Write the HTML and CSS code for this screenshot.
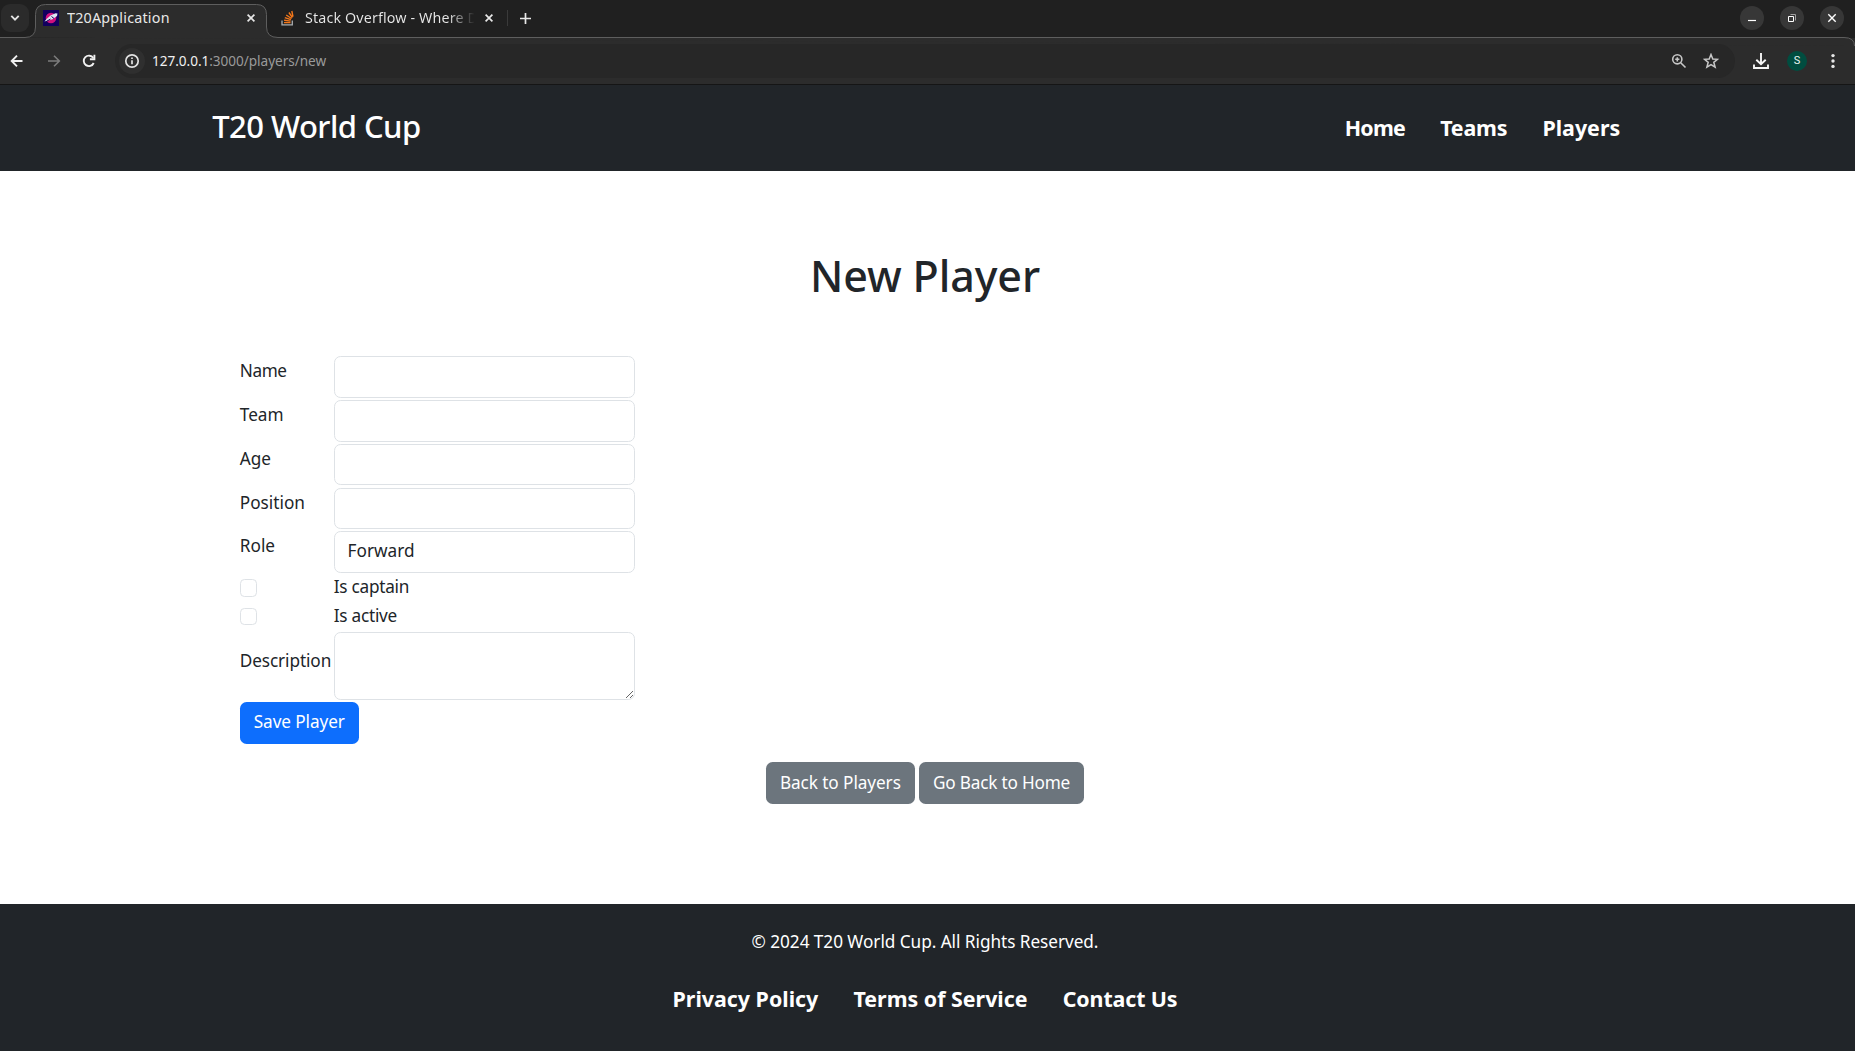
FILE: index.html
```
<!DOCTYPE html>
<html lang="en">
<head>
<meta charset="utf-8">
<title>T20Application</title>
<link rel="stylesheet" href="styles.css">
</head>
<body>
<div class="browser">
  <div class="tabstrip">
    <svg class="tab-outline" width="1855" height="46" fill="#2c2c2c" stroke="#5e5e5e"><path d="M-1 37.5H25Q35.5 37.5 35.5 27V14.500Q35.500 4.500 45.500 4.500H256.500Q266.500 4.500 266.500 14.500V27Q266.500 37.500 278 37.500H1844Q1854.500 37.500 1854.500 46"/></svg>
    <span class="tab-search"><svg width="28" height="28" fill="none" stroke="#e3e3e3" stroke-width="1.9"><path d="M10.300 11.900l3.700 3.700 3.700-3.700"/></svg></span>
    <div class="tab tab-active">
      <svg class="favicon" width="16" height="16"><path fill="#12005e" d="M0 0h16v16H0z"/><circle cx="8" cy="8" r="5.300" fill="#d0107e"/><path d="M1.500 11.500l2-2.500 4-3.500 5-2.300 2 .3-.5 2.400-4 3.200-4.500 1.500z" fill="#dce6f2"/><path d="M2.500 12l5-3M8.500 6.500l2.500 2" stroke="#12005e" stroke-width="1"/></svg>
      <span class="tab-title">T20Application</span>
      <svg width="8" height="8" stroke="#e8e8e8" stroke-width="1.7"><path d="M.6.600l6.800 6.800M7.400.600L.600 7.400"/></svg>
    </div>
    <div class="tab tab-second">
      <svg class="favicon" width="16" height="16" fill="none"><path d="M1 10.500v4.300h10.300v-4.300" stroke="#a9adb0" stroke-width="1.300"/><path d="M3 12.600h6.500M3.100 10.300l6.500.8M3.800 7.700l6.100 2M5.200 5l5.400 3.500M7.900 2.500l3.500 5M10.800 1l1.200 5.700" stroke="#f4771a" stroke-width="1.400"/></svg>
      <span class="tab-title tab-title-fade">Stack Overflow - Where D</span>
      <svg width="8" height="8" stroke="#e8e8e8" stroke-width="1.700"><path d="M.6.600l6.800 6.800M7.400.600L.600 7.400"/></svg>
    </div>
    <span class="tab-divider"></span>
    <svg class="tab-new" width="11" height="11" stroke="#e8e8e8" stroke-width="1.700"><path d="M5.500 0v11M0 5.500h11"/></svg>
    <div class="window-buttons">
      <span class="window-button"><svg width="24" height="24" stroke="#fff" stroke-width="1.200"><path d="M8 14.500h8"/></svg></span>
      <span class="window-button"><svg width="24" height="24" fill="none" stroke="#fff" stroke-width="1"><path stroke="#a0a0a0" d="M10.500 8.500h5v6"/><path d="M8.500 10.500h5v5h-5z"/></svg></span>
      <span class="window-button"><svg width="24" height="24" stroke="#fff" stroke-width="1.400"><path d="M8.300 8.300l7.400 7.400M15.700 8.300l-7.400 7.400"/></svg></span>
    </div>
  </div>
  <div class="toolbar">
    <svg width="14" height="14" fill="none" stroke="#f1f1f1" stroke-width="1.900"><path d="M12.500 7H2M7 1.700L1.700 7 7 12.300"/></svg>
    <svg class="nav-forward" width="14" height="14" fill="none" stroke="#7c7c7c" stroke-width="1.600"><path d="M1 7h10.500M7 1.700L12.300 7 7 12.300"/></svg>
    <svg class="nav-reload" width="14" height="14" fill="none" stroke="#f1f1f1" stroke-width="1.900"><path d="M11.700 9A5.200 5.200 0 1 1 11.300 4"/><path d="M12.400.8v4.500H7.900" /></svg>
    <div class="omnibox">
      <span class="site-info"><svg width="16" height="16" fill="none" stroke="#e3e3e3" stroke-width="1.700"><circle cx="8" cy="8" r="6.200"/><path d="M8 7.200v4M8 4.500v1.600"/></svg></span>
      <span class="url"><span class="url-host">127.0.0.1</span>:3000/players/new</span>
      <svg class="zoom-icon" width="16" height="16" fill="none" stroke="#c7c7c7" stroke-width="1.600"><circle cx="6.300" cy="6.300" r="4.600"/><path d="M9.700 9.700l4.800 4.800M4.200 6.300h4.200M6.300 4.200v4.200"/></svg>
      <svg width="16" height="16" fill="none" stroke="#c7c7c7" stroke-width="1.500"><path d="M8 1.500l1.800 4.500 4.700.3-3.700 3 1.300 4.900L8 11.600l-4.100 2.600 1.300-4.900-3.700-3 4.700-.3z"/></svg>
    </div>
    <svg class="download-icon" width="16" height="16" fill="none" stroke="#f5f5f5" stroke-width="1.900"><path d="M8 0v11M3.300 6.700L8 11.200l4.700-4.500M1 11.500V15h14v-3.500"/></svg>
    <span class="avatar">S</span>
    <svg class="menu-icon" width="4" height="16" fill="#e8e8e8"><circle cx="2" cy="2.600" r="1.700"/><circle cx="2" cy="8" r="1.700"/><circle cx="2" cy="13.400" r="1.700"/></svg>
  </div>
</div>
<header class="site-header">
  <div class="container header-row">
    <span class="brand">T20 World Cup</span>
    <nav class="main-nav"><a class="nav-home">Home</a><a class="nav-teams">Teams</a><a>Players</a></nav>
  </div>
</header>
<main class="content">
  <h1 class="title">New Player</h1>
  <form class="player-form">
    <label class="field-label tight">Name</label><input class="control">
    <label class="field-label">Team</label><input class="control">
    <label class="field-label">Age</label><input class="control">
    <label class="field-label">Position</label><input class="control">
    <label class="field-label">Role</label><div class="control role">Forward</div>
    <input type="checkbox" class="check"><label class="check-label">Is captain</label>
    <input type="checkbox" class="check"><label class="check-label">Is active</label>
    <label class="description-label">Description</label><textarea class="control description"></textarea>
    <button type="button" class="btn btn-primary">Save Player</button>
  </form>
  <div class="actions"><a class="btn">Back to Players</a><a class="btn btn-home">Go Back to Home</a></div>
</main>
<footer class="site-footer">
  <p class="copyright">© 2024 T20 World Cup. All Rights Reserved.</p>
  <nav class="footer-nav"><a>Privacy Policy</a><a>Terms of Service</a><a class="nav-contact">Contact Us</a></nav>
</footer>
</body>
</html>
```
FILE: styles.css
```
* { box-sizing: border-box; }
body {
  margin: 0;
  height: 1051px;
  display: flex;
  flex-direction: column;
  overflow: hidden;
  background: #fff;
  color: #212529;
  font: 17.2px/26.4px "Noto Sans", sans-serif;
}
svg { display: block; flex: none; }

/* Browser window */
.browser { height: 85px; background: #2c2c2c; border-bottom: 1px solid #151515; flex: none; }
.tabstrip { position: relative; height: 38px; display: flex; align-items: center; background: #202020; padding-bottom: 2px; }
.tab-outline { position: absolute; left: 0; top: 0; }
.tab-search { position: relative; width: 28px; height: 28px; margin-left: 1px; border-radius: 9px; background: #2b2b2b; }
.tab { position: relative; display: flex; align-items: center; color: #e8e8e8; font-size: 14.3px; letter-spacing: .22px; line-height: 20px; white-space: nowrap; }
.tab-active { margin-left: 14px; width: 212px; }
.tab-second { margin-left: 26px; width: 212px; }
.favicon { margin-right: 8px; }
.tab-title { width: 180px; overflow: hidden; }
.tab-second .tab-title { width: 169px; margin-right: 11px; letter-spacing: .13px; }
.tab-title-fade { color: transparent; background: linear-gradient(90deg, #e8e8e8 142px, transparent 170px); background-clip: text; -webkit-background-clip: text; }
.tab-divider { width: 1px; height: 16px; margin-left: 14px; background: #3a3a3a; }
.tab-new { position: relative; margin-left: 12px; }
.window-buttons { display: flex; gap: 16px; margin: 0 11px 0 auto; }
.window-button { width: 24px; height: 24px; border-radius: 50%; background: #373737; position: relative; }
.toolbar { position: relative; height: 46px; display: flex; align-items: center; padding: 0 20px 0 10px; }
.nav-forward { margin-left: 23px; }
.nav-reload { margin-left: 21px; }
.omnibox { display: flex; align-items: center; width: 1620px; height: 34px; margin-left: 19px; padding: 0 16px 0 4px; border-radius: 17px; background: #272727; }
.site-info { width: 26px; height: 26px; padding: 5px; border-radius: 50%; background: #2f2f2f; }
.url { margin-left: 7px; margin-right: auto; color: #9a9a9a; font-size: 13.6px; letter-spacing: -.04px; }
.url-host { color: #f0f0f0; }
.zoom-icon { margin-right: 16px; }
.download-icon { margin-left: 18px; }
.avatar { width: 20px; height: 20px; margin-left: 18px; border-radius: 50%; background: #004d40; color: #e8f5f2; font: 11px/20px Roboto, sans-serif; text-align: center; }
.menu-icon { margin-left: 24px; }

/* Site header */
.site-header { flex: none; width: 100%; height: 86px; background: #212529; color: #fff; }
.container { width: 1425.6px; margin-left: 212.2px; padding-right: 17.6px; }
.header-row { display: flex; justify-content: space-between; align-items: center; height: 86px; }
.brand { font-size: 31px; font-weight: 550; letter-spacing: -.55px; position: relative; top: -2px; }
.main-nav, .footer-nav { display: flex; gap: 35.2px; font-size: 21.4px; font-weight: 700; }
.nav-home { letter-spacing: -.75px; }
.nav-teams { letter-spacing: -.2px; }
.nav-contact { letter-spacing: -.12px; }

/* Form page */
.content { width: 1850px; height: 733px; flex: none; }
.title { margin: 77px 0 52.2px; height: 56px; text-align: center; font-size: 43px; line-height: 55px; font-weight: 550; letter-spacing: -.1px; }
.player-form { display: grid; grid-template-columns: 91.8px 301px; gap: 2.2px; margin-left: 239.8px; }
.control { height: 41.6px; padding: 6.6px 13.2px; border: 1px solid #dee2e6; border-radius: 6.6px; background: #fff; color: #212529; font: inherit; }
.role { padding: 5.6px 12.8px; }
.field-label { padding-top: 2px; }
.tight { letter-spacing: -.4px; }
.check { appearance: none; width: 17.6px; height: 17.6px; margin: 4px 0 0; border: 1px solid #dee2e6; border-radius: 4.4px; }
.check-label { letter-spacing: -.25px; position: relative; top: -.8px; }
.description { height: 68px; resize: vertical; }
.description-label { align-self: center; position: relative; top: -5px; letter-spacing: -.1px; }
.btn { display: inline-block; height: 41.6px; padding: 7.4px 14px; border: 0; border-radius: 6.6px; background: #6c757d; color: #fff; font: inherit; letter-spacing: -.08px; white-space: nowrap; }
.btn-primary { width: 119px; padding: 0 0 2px; background: #0d6efd; }
.actions { display: flex; justify-content: center; gap: 4.2px; margin-top: 18.3px; }
.btn-home { letter-spacing: -.2px; }

/* Site footer */
.site-footer { width: 100%; flex: 1; padding-top: 24.6px; background: #212529; color: #fff; }
.copyright { width: 1850px; margin: 0; text-align: center; letter-spacing: -.04px; }
.footer-nav { width: 1850px; justify-content: center; margin-top: 31px; }
```
